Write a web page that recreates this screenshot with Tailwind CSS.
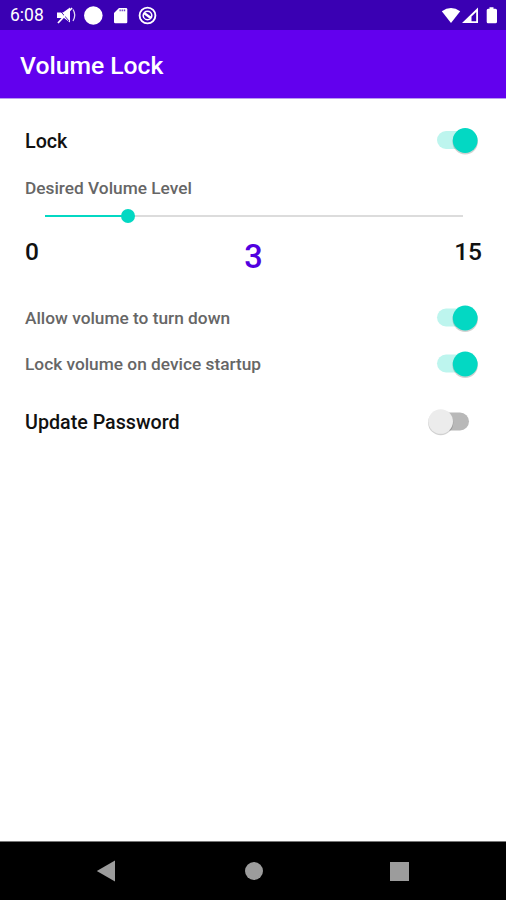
<!DOCTYPE html>
<html lang="en">
<head>
<meta charset="utf-8">
<title>Volume Lock</title>
<script src="https://cdn.jsdelivr.net/npm/@tailwindcss/browser@4"></script>
</head>
<body class="bg-white">
<div class="flex h-[900px] w-[506px] flex-col overflow-hidden bg-white font-['Roboto',sans-serif] font-medium text-[#111111]">
  <!-- Status bar -->
  <header class="flex h-[30px] shrink-0 items-center justify-between bg-[#3a00b3] pl-[10px] pr-[8px] text-white">
    <div class="flex items-center">
      <span class="w-[46px] pt-[1px] text-[17.5px] leading-[29px] font-normal">6:08</span>
      <svg class="h-[20px] w-[22px]" viewBox="0 0 22 20" fill="none" stroke="white">
        <path d="M1 7.500H7L14 2.500v15l-6-4.500H1z" fill="white" stroke="none"/>
        <path d="M3 4.500L13 16" stroke="#3a00b3" stroke-width=".9"/>
        <path d="M2 18L16 3" stroke-width="1.800"/>
        <path d="M17 4.500q3.500 5.500 0 11.500" stroke-width="1.300" opacity=".85"/>
      </svg>
      <svg class="ml-[6px] h-[20px] w-[20px]" viewBox="0 0 20 20"><circle cx="9.300" cy="10.500" r="9.300" fill="white"/></svg>
      <svg class="ml-[9px] h-[18px] w-[16px]" viewBox="0 0 16 18"><path d="M6 2H13q1.300 0 1.300 1.300V16q0 1.300-1.300 1.300H2.300Q1 17.300 1 16V7z" fill="white"/><path d="M6.500 4.300h6.500" stroke="#3a00b3" stroke-width="1.700" stroke-dasharray="1.300 .8" opacity=".75"/></svg>
      <svg class="ml-[9px] h-[20px] w-[20px]" viewBox="0 0 20 20" fill="none" stroke="white"><circle cx="9.500" cy="10.500" r="7.900" stroke-width="1.900"/><circle cx="9.500" cy="10.500" r="4.300" stroke-width="1.600"/><path d="M6 8l7 5" stroke-width="2.600"/><path d="M3.500 12.500l3 3" stroke="#3a00b3" stroke-width="1.200"/></svg>
    </div>
    <div class="flex items-center">
      <svg class="h-[18px] w-[20px]" viewBox="0 0 20 18"><path d="M.8 5.300Q10-1.500 19.200 5.300L10 17z" fill="white"/></svg>
      <svg class="ml-[1px] h-[18px] w-[17px]" viewBox="0 0 17 18"><path fill-rule="evenodd" d="M0 17L16 1.500V17zM9.500 10.500v4.800h4.700V6z" fill="white"/></svg>
      <svg class="ml-[7px] h-[18px] w-[12px]" viewBox="0 0 12 18"><path d="M3.500 1.300h4v1.500h2q1.500 0 1.500 1.500v11.500q0 1.500-1.500 1.500h-7.500Q.7 17.300.7 15.800V4.300q0-1.500 1.500-1.500h1.300z" fill="white"/></svg>
    </div>
  </header>
  <!-- App bar -->
  <div class="flex h-[69px] shrink-0 items-center border-b border-[#b99bf0] bg-[#6200ee] px-[20px] pt-[3px]">
    <h1 class="text-[24.7px] leading-[30px] text-white">Volume Lock</h1>
  </div>
  <main class="flex flex-1 flex-col pl-[25px] pr-[24px] pt-[19px]">
    <div class="flex h-[46px] items-center justify-between">
      <span class="pt-[2px] text-[19.7px]">Lock</span>
      <svg class="h-[32px] w-[46px]" viewBox="0 0 46 32"><rect x="1" y="6" width="34" height="18" rx="9" fill="#bdf5ee"/><circle cx="29.200" cy="16.800" r="12.700" fill="#000" opacity=".18"/><circle cx="29.200" cy="15.500" r="12.400" fill="#03d8c3"/></svg>
    </div>
    <div class="flex h-[47px] items-center pt-[2px]"><span class="text-[17.3px] text-[#666666]">Desired Volume Level</span></div>
    <div class="relative mr-[19px] ml-[20px] mt-[-3px] flex h-[16px] items-center">
      <div class="h-[2px] w-full bg-[#dcdcdc]"></div>
      <div class="absolute left-0 top-[7px] h-[2px] w-[83px] bg-[#03d8c3]"></div>
      <div class="absolute left-[76px] top-[1px] h-[14px] w-[14px] rounded-full bg-[#03d8c3]"></div>
    </div>
    <div class="flex h-[71px] items-start justify-between pt-[13px] text-[24.5px] leading-[30px]">
      <span class="w-[60px]">0</span>
      <span class="text-[32.5px] leading-[40px] text-[#5200e0]">3</span>
      <span class="w-[60px] text-right">15</span>
    </div>
    <div class="flex h-[46px] items-center justify-between text-[#666666]">
      <span class="pt-[1px] text-[17.3px]">Allow volume to turn down</span>
      <svg class="h-[32px] w-[46px]" viewBox="0 0 46 32"><rect x="1" y="6.500" width="34" height="18" rx="9" fill="#bdf5ee"/><circle cx="29.200" cy="17.200" r="12.700" fill="#000" opacity=".18"/><circle cx="29.200" cy="16" r="12.400" fill="#03d8c3"/></svg>
    </div>
    <div class="flex h-[46px] items-center justify-between text-[#666666]">
      <span class="pt-[1px] text-[17.3px]">Lock volume on device startup</span>
      <svg class="h-[32px] w-[46px]" viewBox="0 0 46 32"><rect x="1" y="6.500" width="34" height="18" rx="9" fill="#bdf5ee"/><circle cx="29.200" cy="17.200" r="12.700" fill="#000" opacity=".18"/><circle cx="29.200" cy="16" r="12.400" fill="#03d8c3"/></svg>
    </div>
    <div class="mt-[12px] flex h-[46px] items-center justify-between">
      <span class="pt-[2px] text-[19.7px]">Update Password</span>
      <svg class="mr-[11px] h-[32px] w-[46px]" viewBox="0 0 46 32"><rect x="10" y="6.500" width="34" height="18" rx="9" fill="#b8b8b8"/><circle cx="15.700" cy="16.700" r="12.600" fill="#000" opacity=".18"/><circle cx="15.700" cy="15.500" r="12.300" fill="#ececec"/></svg>
    </div>
  </main>
  <!-- Navigation bar -->
  <nav class="flex h-[59px] shrink-0 items-center justify-between border-t border-[#777777] bg-black pr-[97px] pl-[96px]">
    <svg class="h-[22px] w-[20px]" viewBox="0 0 20 22"><path d="M.8 11L19 .5v21z" fill="#9c9c9c"/></svg>
    <div class="ml-[1px] h-[18px] w-[18px] rounded-full bg-[#9c9c9c]"></div>
    <div class="h-[19px] w-[19px] bg-[#9c9c9c]"></div>
  </nav>
</div>
</body>
</html>
